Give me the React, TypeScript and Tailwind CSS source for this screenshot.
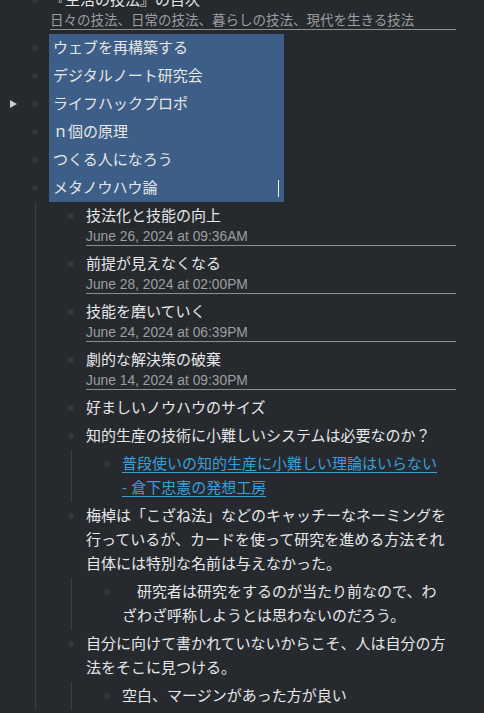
import React from 'react';

type OutlineNode = {
    text: string;
    sub?: string;
    date?: string;
    link?: boolean;
    selected?: boolean;
    collapsed?: boolean;
    cursor?: boolean;
    children?: OutlineNode[];
};

const outline: OutlineNode[] = [
    { text: '『生活の技法』の目次', sub: '日々の技法、日常の技法、暮らしの技法、現代を生きる技法' },
    { text: 'ウェブを再構築する', selected: true },
    { text: 'デジタルノート研究会', selected: true },
    { text: 'ライフハックプロポ', selected: true, collapsed: true },
    { text: 'ｎ個の原理', selected: true },
    { text: 'つくる人になろう', selected: true },
    {
        text: 'メタノウハウ論',
        selected: true,
        cursor: true,
        children: [
            { text: '技法化と技能の向上', date: 'June 26, 2024 at 09:36AM' },
            { text: '前提が見えなくなる', date: 'June 28, 2024 at 02:00PM' },
            { text: '技能を磨いていく', date: 'June 24, 2024 at 06:39PM' },
            { text: '劇的な解決策の破棄', date: 'June 14, 2024 at 09:30PM' },
            { text: '好ましいノウハウのサイズ' },
            {
                text: '知的生産の技術に小難しいシステムは必要なのか？',
                children: [
                    {
                        text: '普段使いの知的生産に小難しい理論はいらない \n- 倉下忠憲の発想工房',
                        link: true,
                    },
                ],
            },
            {
                text: '梅棹は「こざね法」などのキャッチーなネーミングを行っているが、カードを使って研究を進める方法それ自体には特別な名前は与えなかった。',
                children: [
                    { text: '\u3000研究者は研究をするのが当たり前なので、わざわざ呼称しようとは思わないのだろう。' },
                ],
            },
            {
                text: '自分に向けて書かれていないからこそ、人は自分の方法をそこに見つける。',
                children: [{ text: '空白、マージンがあった方が良い' }],
            },
        ],
    },
];

const Row: React.FC<{ node: OutlineNode; depth: number }> = ({ node, depth }) => {
    const hasNote = !!(node.sub || node.date);

    return (
        <div>
            <div className="flex">
                {/* Bullet column */}
                <div className="relative w-[20px] h-[24px] mt-[2px] mr-[5px] shrink-0 flex items-center justify-center">
                    {node.collapsed && (
                        <svg
                            className="absolute left-[-15px] top-[8px]"
                            width="7"
                            height="8"
                            viewBox="0 0 7 8"
                        >
                            <path d="M0 0 L7 4 L0 8 Z" fill="#c9cbcd" />
                        </svg>
                    )}
                    <span className="w-[6px] h-[6px] rounded-full bg-[#33373c]" />
                </div>

                {/* Content */}
                <div
                    className={`relative min-w-0 ${hasNote ? 'pt-[2px] pb-[4px]' : 'py-[2px]'} ${
                        node.selected ? 'w-[235px] bg-[#3d5e86] -ml-[1px] pl-[4px]' : 'flex-1'
                    }`}
                >
                    {node.link ? (
                        <a className="block whitespace-pre-line text-[15px] leading-[24px] text-[#3a9fd9]">
                            {node.text.split('\n').map((line, i) => (
                                <span key={i} className="underline underline-offset-[3px] decoration-[1px]">
                                    {line}
                                    {i === 0 ? '\n' : ''}
                                </span>
                            ))}
                        </a>
                    ) : (
                        <div className="text-[15px] leading-[24px] text-[#e6e7e8]">{node.text}</div>
                    )}
                    {node.cursor && (
                        <span className="absolute right-[5px] top-[6px] w-[1.5px] h-[17px] bg-[#f0f0f0]" />
                    )}
                    {hasNote && (
                        <div
                            className={`h-[18px] border-b border-[#8b8d90] leading-[17px] text-[#9c9ea1] whitespace-nowrap ${
                                node.sub ? 'text-[13.5px]' : 'text-[13.8px]'
                            }`}
                        >
                            {node.sub || node.date}
                        </div>
                    )}
                </div>
            </div>

            {node.children && (
                <div className={`ml-[10px] border-l border-[#3c4045] pl-[25px] ${depth >= 1 ? 'pr-[6px]' : ''}`}>
                    {node.children.map((child, i) => (
                        <Row key={i} node={child} depth={depth + 1} />
                    ))}
                </div>
            )}
        </div>
    );
};

export default function App() {
    return (
        <div className="h-[713px] w-full overflow-hidden bg-[#262a2f] font-['Liberation_Sans','Noto_Sans_CJK_JP',sans-serif]">
            <div className="mt-[-14px] pl-[25px] pr-[28px]">
                {outline.map((node, i) => (
                    <Row key={i} node={node} depth={0} />
                ))}
            </div>
        </div>
    );
}
